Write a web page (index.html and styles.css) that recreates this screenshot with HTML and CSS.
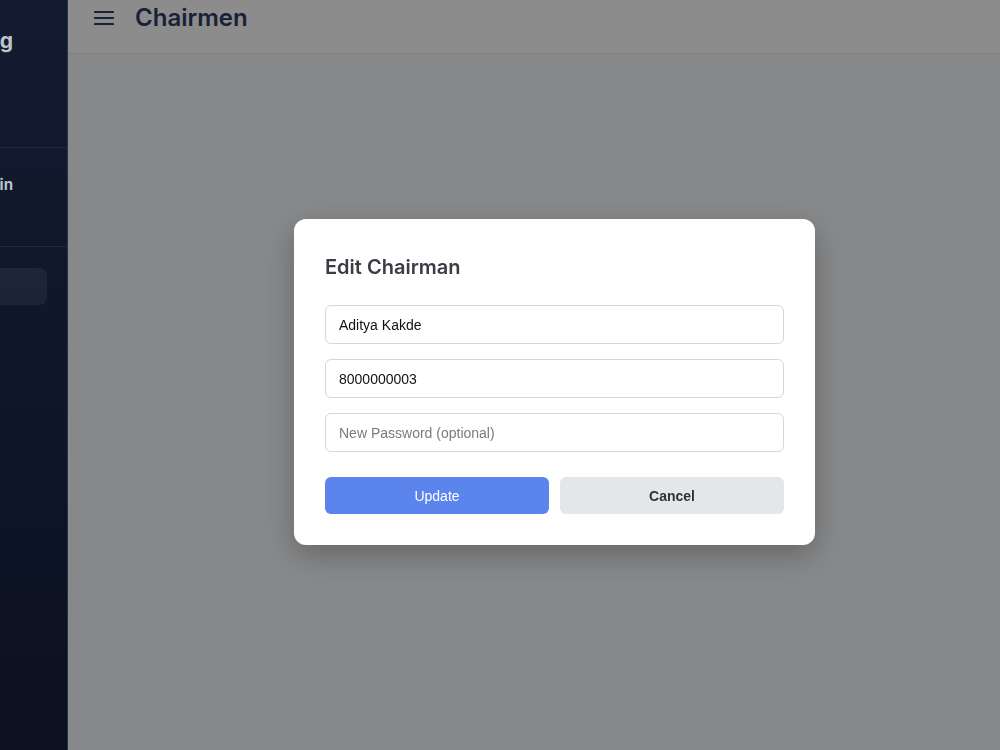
FILE: index.html
```html
<!DOCTYPE html>
<html lang="en">
<head>
  <meta charset="UTF-8">
  <title>Chairmen - Admin</title>
  <meta name="viewport" content="width=device-width, initial-scale=1">
  <link rel="stylesheet" href="styles.css">
</head>
<body>
  <div class="layout">
    <aside class="sidebar">
      <div class="brand">E-Voting</div>
      <div class="role">Super Admin</div>
      <nav class="nav">
        <a class="nav-item active" href="#">Chairmen</a>
      </nav>
    </aside>

    <main class="main">
      <header class="topbar">
        <svg class="menu-icon" width="20" height="16" viewBox="0 0 20 16">
          <path d="M1 2h18M1 8h18M1 14h18" stroke="currentColor" stroke-width="2.2" stroke-linecap="round"/>
        </svg>
        <h1>Chairmen</h1>
      </header>
      <section class="content"></section>
    </main>
  </div>

  <div class="overlay">
    <div class="modal">
      <h3>Edit Chairman</h3>
      <form onsubmit="return false;">
        <input type="text" value="Aditya Kakde">
        <input type="tel" value="8000000003">
        <input type="password" placeholder="New Password (optional)">
        <div class="actions">
          <button type="submit" class="btn-update">Update</button>
          <button type="button" class="btn-cancel">Cancel</button>
        </div>
      </form>
    </div>
  </div>
</body>
</html>
```

FILE: styles.css
```css
* {
  box-sizing: border-box;
}

body {
  margin: 0;
  font-family: 'Inter', 'Segoe UI', sans-serif;
  background: #f6f7f9;
  overflow: hidden;
}

.layout {
  display: flex;
  height: 750px;
}

.sidebar {
  position: relative;
  z-index: 20;
  width: 220px;
  flex-shrink: 0;
  margin-left: -152px;
  background: linear-gradient(180deg, #131b31, #0b1120);
  border-right: 1px solid #2a3142;
  color: #bfc2c9;
  display: flex;
  flex-direction: column;
}

.brand {
  height: 148px;
  padding: 28px 54px 0 0;
  text-align: right;
  font-size: 21px;
  font-weight: 700;
  border-bottom: 1px solid rgba(255, 255, 255, 0.07);
}

.role {
  height: 99px;
  padding: 27px 54px 0 0;
  text-align: right;
  font-size: 15px;
  font-weight: 700;
  border-bottom: 1px solid rgba(255, 255, 255, 0.07);
}

.nav {
  padding: 21px 20px;
}

.nav-item {
  display: block;
  height: 37px;
  border-radius: 8px;
  background: rgba(255, 255, 255, 0.06);
  color: transparent;
  text-decoration: none;
}

.main {
  flex: 1;
  display: flex;
  flex-direction: column;
}

.topbar {
  height: 54px;
  background: #ffffff;
  border-bottom: 1px solid #e6e8ec;
  display: flex;
  align-items: center;
  padding: 0 0 0 26px;
  gap: 21px;
  color: #2c3d63;
}

.menu-icon {
  margin-top: -18px;
}

.topbar h1 {
  margin: -18px 0 0;
  font-size: 24px;
  font-weight: 600;
}

.content {
  flex: 1;
}

.overlay {
  position: fixed;
  inset: 0;
  z-index: 10;
  background: rgba(0, 0, 0, 0.45);
  display: flex;
  align-items: center;
  justify-content: center;
  padding: 14px 0 0 109px;
}

.modal {
  position: relative;
  z-index: 30;
  width: 521px;
  background: #ffffff;
  border-radius: 12px;
  padding: 34px 31px 31px;
  box-shadow: 0 10px 30px rgba(0, 0, 0, 0.25);
}

.modal h3 {
  margin: 0 0 24px;
  font-size: 20px;
  line-height: 28px;
  font-weight: 600;
  color: #3a3d44;
}

input {
  display: block;
  width: 100%;
  height: 39px;
  padding: 0 13px;
  margin: 0 0 15px;
  font-family: 'Liberation Sans', Arial, sans-serif;
  font-size: 14px;
  color: #111;
  border: 1px solid #d4d7dc;
  border-radius: 6px;
}

input::placeholder {
  color: #777b82;
}

.actions {
  display: flex;
  gap: 11px;
  margin-top: 25px;
}

button {
  flex: 1;
  height: 37px;
  font-family: 'Liberation Sans', Arial, sans-serif;
  font-size: 14px;
  border: none;
  border-radius: 6px;
  cursor: pointer;
}

.btn-update {
  background: #5b85ed;
  color: #ffffff;
}

.btn-cancel {
  background: #e5e6ea;
  color: #2f3237;
  font-weight: 700;
}
```
